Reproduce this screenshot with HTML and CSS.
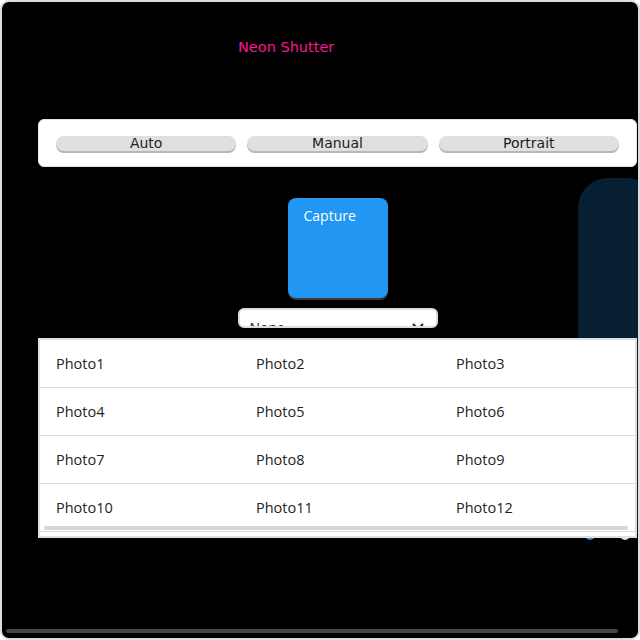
FILE: index.html
```html
<!DOCTYPE html>
<html>
<head>
<meta charset="utf-8">
<link rel="stylesheet" href="styles.css">
</head>
<body>
<div class="screen">
  <div class="pill"></div>
  <div class="knob knob-blue"></div>
  <div class="knob knob-grey"></div>
  <div class="title">Neon Shutter</div>
  <div class="main">
    <div class="modes">
      <div class="mode-btn">Auto</div>
      <div class="mode-btn">Manual</div>
      <div class="mode-btn">Portrait</div>
    </div>
    <div class="capture">Capture</div>
    <div class="dropdown">
      <span class="dd-text">None</span>
      <svg class="dd-arrow" width="12" height="8" viewBox="0 0 12 8"><path d="M1 1 L6 6 L11 1" fill="none" stroke="#222" stroke-width="2"/></svg>
    </div>
    <div class="table">
      <div class="rows">
        <div class="row"><div class="cell">Photo1</div><div class="cell">Photo2</div><div class="cell">Photo3</div></div>
        <div class="row"><div class="cell">Photo4</div><div class="cell">Photo5</div><div class="cell">Photo6</div></div>
        <div class="row"><div class="cell">Photo7</div><div class="cell">Photo8</div><div class="cell">Photo9</div></div>
        <div class="row"><div class="cell">Photo10</div><div class="cell">Photo11</div><div class="cell">Photo12</div></div>
      </div>
      <div class="tscroll"></div>
    </div>
  </div>
  <div class="hscroll"></div>
</div>
</body>
</html>
```
FILE: styles.css
```css
html, body {
  margin: 0;
  padding: 0;
  background: #ffffff;
}
.screen {
  position: relative;
  width: 640px;
  height: 640px;
  box-sizing: border-box;
  border: 2px solid #dcdcdc;
  border-radius: 9px;
  background: #000000;
  overflow: hidden;
  padding: 37px 0 0 36px;
  font-family: "DejaVu Sans", sans-serif;
}
.pill {
  position: absolute;
  left: 576px;
  top: 176px;
  width: 80px;
  height: 356px;
  border-radius: 30px 30px 0 0;
  background: #061f33;
}
.knob {
  position: absolute;
  top: 528px;
  width: 10px;
  height: 10px;
  border-radius: 50%;
}
.knob-blue { left: 583px; background: #2196f3; }
.knob-grey { left: 618px; background: #e0e0e0; }
.title {
  margin-left: 200px;
  font-size: 14.5px;
  line-height: 17px;
  color: #ff1493;
}
.main {
  position: relative;
  width: 599px;
  margin-top: 63px;
  display: flex;
  flex-direction: column;
  align-items: center;
}
.modes {
  align-self: stretch;
  height: 48px;
  box-sizing: border-box;
  background: #ffffff;
  border: 1px solid #e4e4e4;
  border-radius: 6px;
  display: flex;
  align-items: center;
  gap: 11px;
  padding: 0 17px;
}
.mode-btn {
  flex: 1;
  height: 15px;
  background: #e0e0e0;
  border-radius: 8px;
  box-shadow: 0 2px 0 #b8b8b8;
  font-size: 14px;
  line-height: 15px;
  color: #222222;
  text-align: center;
}
.capture {
  margin-top: 31px;
  width: 100px;
  height: 100px;
  box-sizing: border-box;
  background: #2196f3;
  border-radius: 8px;
  box-shadow: 0 2px 0 #3a3a3a;
  padding: 8px 16px;
  font-family: "Open Sans", sans-serif;
  font-size: 14px;
  line-height: 19px;
  color: #ffffff;
}
.dropdown {
  margin-top: 10px;
  width: 200px;
  height: 20px;
  box-sizing: border-box;
  background: #ffffff;
  border: 2px solid #dddddd;
  border-radius: 6px;
  overflow: hidden;
  display: flex;
  justify-content: space-between;
  align-items: flex-start;
  padding: 8px 12px 0 10px;
  font-family: "Open Sans", sans-serif;
  font-size: 14px;
  line-height: 19px;
  color: #222222;
}
.dd-arrow {
  flex: none;
  margin-top: 5px;
}
.table {
  position: relative;
  margin-top: 10px;
  align-self: stretch;
  height: 200px;
  box-sizing: border-box;
  background: #ffffff;
  border: 2px solid #e0e0e0;
  overflow: hidden;
}
.rows {
  width: 600px;
}
.row {
  display: flex;
  height: 48px;
  box-sizing: border-box;
  border-bottom: 1px solid #dddddd;
}
.cell {
  width: 200px;
  flex: none;
  box-sizing: border-box;
  padding-left: 16px;
  font-family: "Open Sans", sans-serif;
  font-size: 14.5px;
  line-height: 47px;
  color: #222222;
}
.tscroll {
  position: absolute;
  left: 4px;
  bottom: 6px;
  width: 584px;
  height: 4px;
  border-radius: 2px;
  background: #d6d6d6;
}
.hscroll {
  position: absolute;
  left: 4px;
  top: 627px;
  width: 612px;
  height: 4px;
  border-radius: 2px;
  background: #444444;
}
```
